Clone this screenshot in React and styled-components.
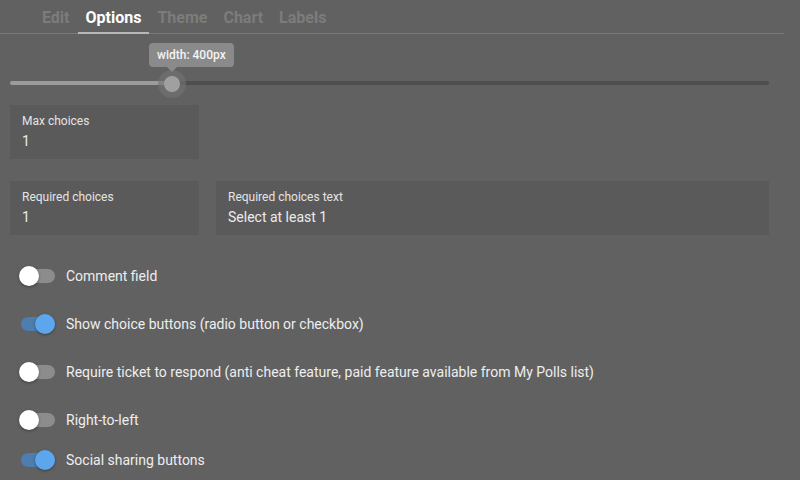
import React from "react";
import styled, { createGlobalStyle } from "styled-components";

const GlobalStyle = createGlobalStyle`
  html, body {
    margin: 0;
    padding: 0;
    background: #616161;
    font-family: Roboto, "Noto Sans", "Liberation Sans", sans-serif;
    overflow: hidden;
  }
`;

const Page = styled.div`
  width: 800px;
  height: 480px;
  background: #616161;
  color: #eeeeee;
`;

const TabBar = styled.div`
  display: flex;
  height: 33px;
  padding-left: 34px;
  margin-right: 16px;
  border-bottom: 1px solid #7a7a7a;
`;

const Tab = styled.div`
  position: relative;
  padding: 0 8px;
  font-size: 16px;
  font-weight: 700;
  line-height: 35px;
  color: ${(p) => (p.active ? "#ffffff" : "#7c7c7c")};
  border-bottom: 2px solid ${(p) => (p.active ? "#b8b8b8" : "transparent")};
  margin-bottom: -1px;
  height: 32px;
`;

const Content = styled.div`
  padding: 0 31px 0 10px;
`;

const SliderArea = styled.div`
  position: relative;
  display: flex;
  align-items: center;
  height: 71px;
  padding-top: 26px;
  box-sizing: border-box;
`;

const TrackFill = styled.div`
  height: 4px;
  border-radius: 2px 0 0 2px;
  background: #9c9c9c;
`;

const TrackRest = styled.div`
  flex: 1;
  height: 4px;
  border-radius: 0 2px 2px 0;
  background: #4f4f4f;
`;

const Thumb = styled.div`
  position: absolute;
  top: 42px;
  width: 16px;
  height: 16px;
  margin-left: -8px;
  border-radius: 50%;
  background: #a0a0a0;
  box-shadow: 0 0 0 6px rgba(115, 115, 115, 0.6);
`;

const Tooltip = styled.div`
  position: absolute;
  top: 9px;
  padding: 0 8px;
  height: 24px;
  line-height: 24px;
  border-radius: 4px;
  background: #8a8a8a;
  color: #f4f4f4;
  font-size: 12px;
  font-weight: 500;
  white-space: nowrap;
  &::after {
    content: "";
    position: absolute;
    left: 18px;
    bottom: -5px;
    border-left: 5px solid transparent;
    border-right: 5px solid transparent;
    border-top: 5px solid #8a8a8a;
  }
`;

const FieldRow = styled.div`
  display: grid;
  grid-template-columns: 189px ${(p) => (p.single ? "" : "1fr")};
  gap: 17px;
  margin-top: ${(p) => p.top}px;
`;

const Field = styled.div`
  height: 54px;
  box-sizing: border-box;
  padding: 8px 12px 0;
  background: #5a5a5a;
`;

const Label = styled.div`
  font-size: 12px;
  line-height: 16px;
  color: #e4e4e4;
`;

const Value = styled.div`
  margin-top: 2px;
  font-size: 14px;
  line-height: 20px;
  color: #ececec;
`;

const Toggles = styled.div`
  display: flex;
  flex-direction: column;
  margin-top: 21px;
`;

const ToggleRow = styled.label`
  display: flex;
  align-items: center;
  height: 40px;
  margin-bottom: ${(p) => (p.last ? 0 : 8)}px;
  font-size: 14px;
  color: #eeeeee;
`;

const SwitchTrack = styled.div`
  display: flex;
  align-items: center;
  justify-content: ${(p) => (p.on ? "flex-end" : "flex-start")};
  width: 34px;
  height: 14px;
  margin: 0 11px;
  border-radius: 7px;
  background: ${(p) => (p.on ? "#4d7eae" : "#8c8c8c")};
`;

const SwitchThumb = styled.div`
  flex: 0 0 20px;
  height: 20px;
  margin-left: ${(p) => (p.on ? 0 : -2)}px;
  border-radius: 50%;
  background: ${(p) => (p.on ? "#5ca6ee" : "#ffffff")};
  box-shadow: 0 1px 3px rgba(0, 0, 0, 0.35);
`;

const tabs = ["Edit", "Options", "Theme", "Chart", "Labels"];

const toggles = [
  { label: "Comment field", on: false },
  { label: "Show choice buttons (radio button or checkbox)", on: true },
  {
    label:
      "Require ticket to respond (anti cheat feature, paid feature available from My Polls list)",
    on: false,
  },
  { label: "Right-to-left", on: false },
  { label: "Social sharing buttons", on: true },
];

const sliderPos = 162;

const App = () => {
  return (
    <Page>
      <GlobalStyle />
      <TabBar>
        {tabs.map((t) => (
          <Tab key={t} active={t === "Options"}>
            {t}
          </Tab>
        ))}
      </TabBar>
      <Content>
        <SliderArea>
          <TrackFill style={{ width: sliderPos }} />
          <TrackRest />
          <Thumb style={{ left: sliderPos }} />
          <Tooltip style={{ left: sliderPos - 23 }}>width: 400px</Tooltip>
        </SliderArea>
        <FieldRow single top={0}>
          <Field>
            <Label>Max choices</Label>
            <Value>1</Value>
          </Field>
        </FieldRow>
        <FieldRow top={22}>
          <Field>
            <Label>Required choices</Label>
            <Value>1</Value>
          </Field>
          <Field>
            <Label>Required choices text</Label>
            <Value>Select at least 1</Value>
          </Field>
        </FieldRow>
        <Toggles>
          {toggles.map((t, i) => (
            <ToggleRow key={t.label} last={i >= toggles.length - 2}>
              <SwitchTrack on={t.on}>
                <SwitchThumb on={t.on} />
              </SwitchTrack>
              {t.label}
            </ToggleRow>
          ))}
        </Toggles>
      </Content>
    </Page>
  );
};

export default App;
